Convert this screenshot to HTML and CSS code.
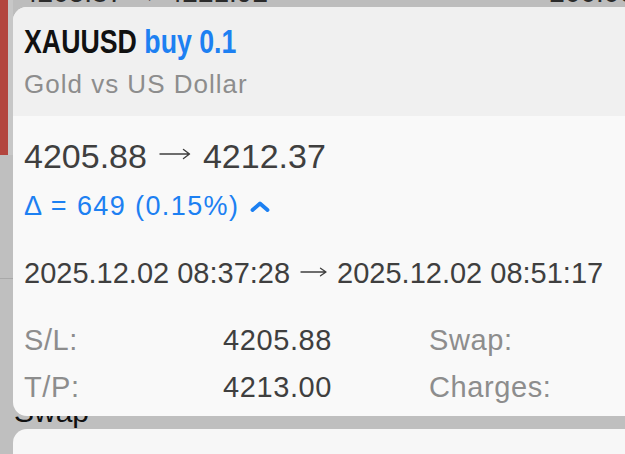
FILE: index.html
```html
<!doctype html>
<html lang="en">
  <head>
    <meta charset="UTF-8" />
    <meta name="viewport" content="width=device-width, initial-scale=1.0" />
    <title>XAUUSD buy 0.1</title>
    <link rel="stylesheet" href="styles.css">
  </head>
  <body>
    <!-- page behind the popup -->
    <div class="backdrop">
      <div class="trade-row">
        <span class="trade-prices">4205.87 → 4221.92</span>
        <span class="trade-profit">200.00</span>
      </div>
      <div class="separator"></div>
      <div class="section-title">Swap</div>
      <div class="section-card"></div>
    </div>

    <!-- popup -->
    <div class="popup">
      <div class="popup-header">
        <div class="title">XAUUSD <span class="side">buy 0.1</span></div>
        <div class="subtitle">Gold vs US Dollar</div>
      </div>
      <div class="popup-body">
        <div class="prices">
          <span>4205.88</span>
          <svg class="arrow arrow-lg" viewBox="0 0 32 12" width="32" height="12" aria-label="→">
            <path d="M1 6H30.5M24.5 1.5L30.5 6L24.5 10.5" fill="none" stroke="currentColor" stroke-width="1.4" stroke-linecap="round" stroke-linejoin="round"></path>
          </svg>
          <span>4212.37</span>
        </div>
        <div class="delta">
          <span>Δ = 649 (0.15%)</span>
          <svg class="chevron" viewBox="0 0 20 11" width="20" height="11">
            <polyline points="2.5,9 10,2.5 17.5,9" fill="none" stroke="currentColor" stroke-width="3.8" stroke-linecap="round" stroke-linejoin="round"></polyline>
          </svg>
        </div>
        <div class="times">
          <span>2025.12.02 08:37:28</span>
          <svg class="arrow arrow-sm" viewBox="0 0 27 10" width="27" height="10" aria-label="→">
            <path d="M1 5H26M20.5 1.2L26 5L20.5 8.8" fill="none" stroke="currentColor" stroke-width="1.3" stroke-linecap="round" stroke-linejoin="round"></path>
          </svg>
          <span>2025.12.02 08:51:17</span>
        </div>
        <div class="details">
          <span class="label">S/L:</span>
          <span class="value">4205.88</span>
          <span class="label">Swap:</span>
          <span class="label">T/P:</span>
          <span class="value">4213.00</span>
          <span class="label">Charges:</span>
        </div>
      </div>
    </div>
  </body>
</html>
```

FILE: styles.css
```css
* {
  margin: 0;
  padding: 0;
  box-sizing: border-box;
}

html,
body {
  width: 625px;
  height: 454px;
  overflow: hidden;
}

body {
  position: relative;
  background-color: #bfbfbf;
  font-family: "Liberation Sans", Arial, sans-serif;
  color: #3f3f3f;
}

/* background page, dimmed */
.backdrop {
  display: flex;
  flex-direction: column;
  height: 100%;
}

.trade-row {
  display: flex;
  justify-content: space-between;
  height: 155px;
  padding: 0 0 0 14px;
  border-left: 8px solid #b3453e;
  font-size: 28px;
  line-height: 28px;
  color: #2b2b2b;
  background: linear-gradient(to right, #c7c7c7 0, #c7c7c7 5px, #bdbdbd 5px);
}

.trade-prices,
.trade-profit {
  margin-top: -21px;
}

.trade-profit {
  margin-right: -10px;
}

.separator {
  margin-top: 123px;
  width: 13px;
  height: 1px;
  background-color: #a9a9a9;
}

.section-title {
  margin-top: 116px;
  padding-left: 14px;
  font-size: 30px;
  line-height: 34px;
  color: #111;
}

.section-card {
  flex: 1;
  margin-left: 13px;
  background-color: #f7f7f7;
  border-top-left-radius: 14px;
}

/* popup */
.popup {
  position: absolute;
  top: 7px;
  left: 13px;
  width: 640px;
  height: 409px;
  border-radius: 14px;
  overflow: hidden;
  background-color: #f9f9f9;
}

.popup-header {
  height: 109px;
  padding: 17px 11px 0;
  background-color: #f0f0f0;
}

.title {
  display: inline-block;
  white-space: nowrap;
  transform: scaleX(0.81);
  transform-origin: left center;
  font-weight: 700;
  font-size: 33px;
  line-height: 36px;
  color: #111;
}

.side {
  color: #1d80f2;
}

.subtitle {
  margin-top: 8px;
  font-size: 26px;
  line-height: 32px;
  letter-spacing: 1px;
  color: #8d8d8d;
}

.popup-body {
  padding: 20px 11px 0;
}

.prices,
.times {
  display: flex;
  align-items: center;
}

.prices {
  gap: 12px;
  font-size: 34px;
  line-height: 40px;
}

.arrow-lg {
  margin-top: -4px;
}

.delta {
  display: flex;
  align-items: center;
  gap: 11px;
  margin-top: 14px;
  font-size: 27px;
  line-height: 32px;
  letter-spacing: 1.4px;
  color: #1d80f2;
}

.chevron {
  margin-top: 1px;
}

.times {
  gap: 10px;
  margin-top: 33px;
  font-size: 29px;
  line-height: 36px;
}

.arrow-sm {
  margin-top: -3px;
}

.details {
  display: grid;
  grid-template-columns: 199px 206px 1fr;
  margin-top: 26px;
  font-size: 29px;
  line-height: 47px;
  letter-spacing: 0.6px;
}

.label {
  color: #8d8d8d;
}
```
